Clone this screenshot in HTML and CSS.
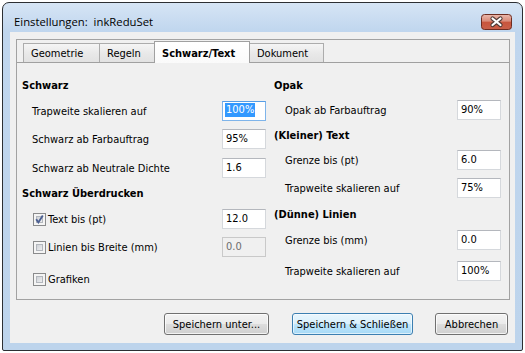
FILE: index.html
```html
<!DOCTYPE html>
<html>
<head>
<meta charset="utf-8">
<title>Einstellungen</title>
<link rel="stylesheet" href="styles.css">
</head>
<body>
<div class="window">
  <div class="titlebar">
    <span class="title">Einstellungen:&nbsp; inkReduSet</span>
    <span class="close">
      <svg width="31" height="16" viewBox="0 0 31 16">
        <defs>
          <linearGradient id="cg" x1="0" y1="0" x2="0" y2="1">
            <stop offset="0" stop-color="#eab9ad"/>
            <stop offset="0.45" stop-color="#d98a78"/>
            <stop offset="0.5" stop-color="#c8553c"/>
            <stop offset="1" stop-color="#c9604a"/>
          </linearGradient>
        </defs>
        <rect x="0.5" y="0.5" width="30" height="15" rx="3" fill="url(#cg)" stroke="#6e2c20"/>
        <path d="M11.5 4.5 L19.5 11 M19.5 4.5 L11.5 11" stroke="#4e3a36" stroke-width="4.2" stroke-linecap="round"/>
        <path d="M11.5 4.5 L19.5 11 M19.5 4.5 L11.5 11" stroke="#ffffff" stroke-width="2.2" stroke-linecap="round"/>
      </svg>
    </span>
  </div>
  <div class="client">
    <div class="tabframe">
      <div class="tabs">
        <div class="tab tab-geo">Geometrie</div>
        <div class="tab tab-reg">Regeln</div>
        <div class="tab tab-sw active">Schwarz/Text</div>
        <div class="tab tab-dok">Dokument</div>
      </div>
      <div class="page">
        <div class="col col-left">
          <div class="hdr mt15">Schwarz</div>
          <div class="row mt7"><span class="lbl">Trapweite skalieren auf</span><span class="field focus"><span class="sel">100%</span></span></div>
          <div class="row mt8"><span class="lbl">Schwarz ab Farbauftrag</span><span class="field">95%</span></div>
          <div class="row mt9"><span class="lbl">Schwarz ab Neutrale Dichte</span><span class="field">1.6</span></div>
          <div class="hdr mt8">Schwarz Überdrucken</div>
          <div class="row mt7">
            <span class="check-lbl"><span class="chk"><svg width="11" height="11" viewBox="0 0 11 11"><path d="M2.2 5.2 L4.4 8.4 L8.8 1.6" fill="none" stroke="#4b5f92" stroke-width="1.9"/></svg></span>Text bis (pt)</span>
            <span class="field">12.0</span>
          </div>
          <div class="row mt8">
            <span class="check-lbl"><span class="chk"></span>Linien bis Breite (mm)</span>
            <span class="field disabled">0.0</span>
          </div>
          <div class="row mt12">
            <span class="check-lbl"><span class="chk"></span>Grafiken</span>
          </div>
        </div>
        <div class="col col-right">
          <div class="hdr mt15">Opak</div>
          <div class="row mt6"><span class="lbl">Opak ab Farbauftrag</span><span class="field">90%</span></div>
          <div class="hdr mt8">(Kleiner) Text</div>
          <div class="row mt6"><span class="lbl">Grenze bis (pt)</span><span class="field">6.0</span></div>
          <div class="row mt8"><span class="lbl">Trapweite skalieren auf</span><span class="field">75%</span></div>
          <div class="hdr mt9">(Dünne) Linien</div>
          <div class="row mt7"><span class="lbl">Grenze bis (mm)</span><span class="field">0.0</span></div>
          <div class="row mt11"><span class="lbl">Trapweite skalieren auf</span><span class="field">100%</span></div>
        </div>
      </div>
    </div>
    <div class="buttons">
      <button class="btn btn-save-as">Speichern unter...</button>
      <button class="btn btn-primary">Speichern &amp; Schließen</button>
      <button class="btn btn-cancel">Abbrechen</button>
    </div>
  </div>
</div>
</body>
</html>
```

FILE: styles.css
```css
* { box-sizing: border-box; }
html, body { margin: 0; padding: 0; }
body {
  background: #ffffff;
  width: 525px;
  height: 353px;
  padding: 2px;
  font-family: "DejaVu Sans Condensed", "DejaVu Sans", sans-serif;
  font-size: 11px;
  color: #000;
}
.window {
  width: 521px;
  height: 349px;
  border: 1px solid #2c2f33;
  border-radius: 7px 7px 2px 2px;
  background: linear-gradient(#d6e5f5 0px, #c0d6ee 28px, #bdd4ec 100%);
  display: flex;
  flex-direction: column;
  padding: 0 7px 7px 7px;
}
.titlebar {
  height: 29px;
  flex: none;
  display: flex;
  align-items: center;
  justify-content: space-between;
  padding: 9px 3px 1px 4px;
}
.title {
  font-family: "Open Sans", "Noto Sans", sans-serif;
  font-size: 11.3px;
  color: #000;
}
.close { display: block; width: 31px; height: 16px; }
.close svg { display: block; }

.client {
  flex: 1;
  background: #f0f0f0;
  display: flex;
  flex-direction: column;
}
.tabframe {
  margin: 7px 0 0 6px;
  width: 494px;
  height: 261px;
  border: 1px solid #a2a2a2;
  display: flex;
  flex-direction: column;
}
.tabs {
  height: 22px;
  flex: none;
  display: flex;
  align-items: flex-end;
  padding-left: 6px;
}
.tab {
  height: 19px;
  border: 1px solid #acacac;
  border-bottom: none;
  background: linear-gradient(#f5f5f5, #e8e8e8 55%, #e2e2e2);
  padding: 2px 0 0 7px;
  line-height: 15px;
  white-space: nowrap;
}
.tab + .tab { margin-left: -1px; }
.tab-geo { width: 77px; }
.tab-reg { width: 56px; }
.tab-sw { width: 96px; }
.tab-dok { width: 75px; }
.tab.active {
  height: 22px;
  margin-bottom: -1px;
  position: relative;
  z-index: 1;
  background: linear-gradient(#ffffff, #fafafa);
  font-weight: bold;
  padding-top: 4px;
  border-color: #a0a0a0;
}
.page {
  flex: 1;
  border-top: 1px solid #a0a0a0;
  display: flex;
  gap: 8px;
  padding-left: 5px;
}
.col { display: flex; flex-direction: column; }
.col-left { width: 244px; }
.col-right { width: 227px; }

.hdr {
  height: 16px;
  line-height: 16px;
  font-weight: bold;
  white-space: nowrap;
}
.row {
  height: 20px;
  display: flex;
  align-items: center;
  justify-content: space-between;
  white-space: nowrap;
}
.col-left .lbl { padding-left: 10px; }
.col-right .lbl { padding-left: 11px; }
.check-lbl {
  display: flex;
  align-items: center;
  padding-left: 11px;
}
.chk {
  width: 13px;
  height: 13px;
  margin-right: 2px;
  border: 1px solid #8a8b8c;
  padding: 2px;
  background: linear-gradient(135deg, #c8ccd2, #f4f4f4) content-box, #f4f4f4;
  box-shadow: inset 0 0 0 2px #f4f4f4, inset 0 0 0 3px #b3b7bd;
  position: relative;
}
.chk svg { position: absolute; left: 0; top: 0; }
.field {
  width: 44px;
  height: 20px;
  border: 1px solid #d5d8dc;
  border-top-color: #b4b7bd;
  background: #ffffff;
  padding-left: 3px;
  line-height: 18px;
}
.field.focus {
  border-color: #7eb4ea;
  border-top-color: #569de5;
  padding-left: 2px;
}
.sel {
  background: #3399ff;
  color: #fff;
  padding: 0 1px;
  display: inline-block;
  line-height: 14px;
  vertical-align: 1px;
}
.field.disabled {
  background: #f0f0f0;
  border-color: #c9c9c9;
  color: #6d6d6d;
}
.mt6 { margin-top: 6px; }
.mt7 { margin-top: 7px; }
.mt8 { margin-top: 8px; }
.mt9 { margin-top: 9px; }
.mt11 { margin-top: 11px; }
.mt12 { margin-top: 12px; }
.mt15 { margin-top: 15px; }

.buttons {
  display: flex;
  justify-content: flex-end;
  gap: 23px;
  margin-top: 13px;
  padding-right: 7px;
}
.btn {
  height: 22px;
  border: 1px solid #707070;
  border-radius: 3px;
  background: linear-gradient(#f3f3f3 0%, #ebebeb 48%, #dddddd 52%, #cfcfcf 100%);
  box-shadow: inset 0 0 0 1px rgba(255,255,255,0.75);
  font-family: inherit;
  font-size: 11px;
  color: #000;
  padding: 0;
}
.btn-save-as { width: 105px; }
.btn-primary {
  width: 121px;
  margin-right: -1px;
  border-color: #3c7fb1;
  background: linear-gradient(#eaf6fd 0%, #d9f0fc 48%, #bee6fd 52%, #a7d9f5 100%);
  box-shadow: inset 0 0 0 1px rgba(255,255,255,0.6);
}
.btn-cancel { width: 73px; }
```
